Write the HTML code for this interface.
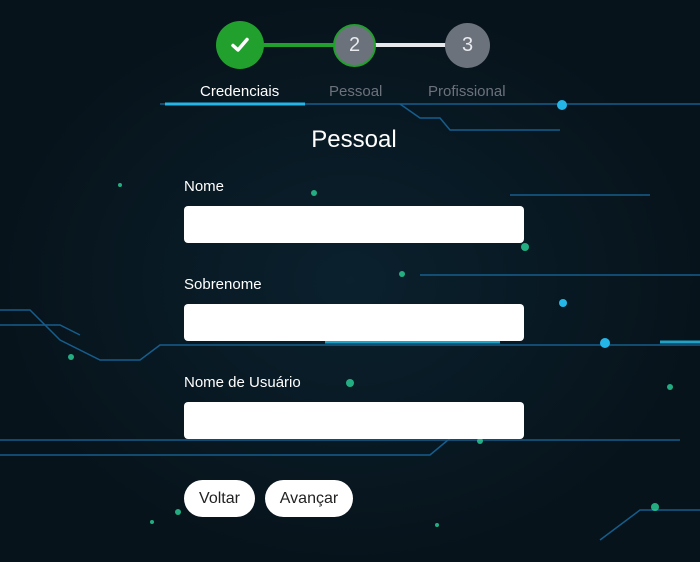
<!DOCTYPE html>
<html><head><meta charset="utf-8"><style>
*{margin:0;padding:0;box-sizing:border-box}
body{width:700px;height:562px;overflow:hidden;background:#07131b;font-family:"Liberation Sans",sans-serif;position:relative;color:#fff}
svg.bg{position:absolute;left:0;top:0}
.c{position:absolute;border-radius:50%;display:flex;align-items:center;justify-content:center;font-size:20px;color:#e8eaee}
.ln{position:absolute;height:4px;top:43px}
.lab{position:absolute;font-size:15px;top:83px}
.t{position:absolute;left:0;width:708px;text-align:center;top:126px;font-size:24px}
.l{position:absolute;left:184px;font-size:15px}
.in{position:absolute;left:184px;width:340px;height:37px;background:#fff;border-radius:4px}
.b{position:absolute;top:480px;height:37px;background:#fff;border-radius:19px;color:#222;font-size:16px;display:flex;align-items:center;justify-content:center}
</style></head><body>
<svg class="bg" width="700" height="562">
<defs><radialGradient id="g" cx="0.5" cy="0.5" r="0.5"><stop offset="0" stop-color="#0c2a3a"/><stop offset="1" stop-color="#07131b"/></radialGradient></defs>
<rect width="700" height="562" fill="url(#g)" opacity=".6"/>
<g fill="none" stroke="#1a6fa8" stroke-width="1.5" opacity=".8">
<path d="M160 104 H700"/>
<path d="M400 104 L420 118 H440 L450 130 H560"/>
<path d="M0 310 H30 L60 340 L100 360 H140 L160 345 H700"/>
<path d="M0 325 H60 L80 335"/>
<path d="M0 440 H680"/>
<path d="M0 455 H430 L460 430"/>
<path d="M420 275 H700"/>
<path d="M510 195 H650"/>
<path d="M600 540 L640 510 H700"/>
</g>
<path d="M165 104 H305" stroke="#25b6e8" stroke-width="3"/>
<path d="M325 342 H500 M660 342 H700" stroke="#25c6f0" stroke-width="3" opacity=".8"/>
<g fill="#2ad39a" opacity=".8">
<circle cx="314" cy="193" r="3"/><circle cx="525" cy="247" r="4"/><circle cx="402" cy="274" r="3"/><circle cx="350" cy="383" r="4"/><circle cx="178" cy="512" r="3"/><circle cx="152" cy="522" r="2"/><circle cx="480" cy="441" r="3"/><circle cx="120" cy="185" r="2"/><circle cx="655" cy="507" r="4"/><circle cx="670" cy="387" r="3"/><circle cx="437" cy="525" r="2"/><circle cx="71" cy="357" r="3"/></g>
<g fill="#25b6e8"><circle cx="562" cy="105" r="5"/><circle cx="605" cy="343" r="5"/><circle cx="563" cy="303" r="4"/></g>
</svg>
<div class="ln" style="left:262px;width:73px;background:#22a02e"></div>
<div class="ln" style="left:374px;width:72px;background:#e6e8ec"></div>
<div class="c" style="left:216px;top:21px;width:48px;height:48px;background:#22a02e">
<svg width="18" height="16" viewBox="0 0 18 16"><path d="M2 8.5 L7 13 L16 2.5" fill="none" stroke="#fff" stroke-width="3.5" stroke-linecap="round" stroke-linejoin="round"/></svg></div>
<div class="c" style="left:333px;top:24px;width:43px;height:43px;background:#6c727c;border:2px solid #22a02e">2</div>
<div class="c" style="left:445px;top:23px;width:45px;height:45px;background:#6c727c">3</div>
<div class="lab" style="left:200px">Credenciais</div>
<div class="lab" style="left:329px;color:#6c727c">Pessoal</div>
<div class="lab" style="left:428px;color:#6c727c">Profissional</div>
<div class="t">Pessoal</div>
<div class="l" style="top:178px">Nome</div>
<div class="in" style="top:206px"></div>
<div class="l" style="top:276px">Sobrenome</div>
<div class="in" style="top:304px"></div>
<div class="l" style="top:374px">Nome de Usuário</div>
<div class="in" style="top:402px"></div>
<div class="b" style="left:184px;width:71px">Voltar</div>
<div class="b" style="left:265px;width:88px">Avançar</div>
</body></html>
